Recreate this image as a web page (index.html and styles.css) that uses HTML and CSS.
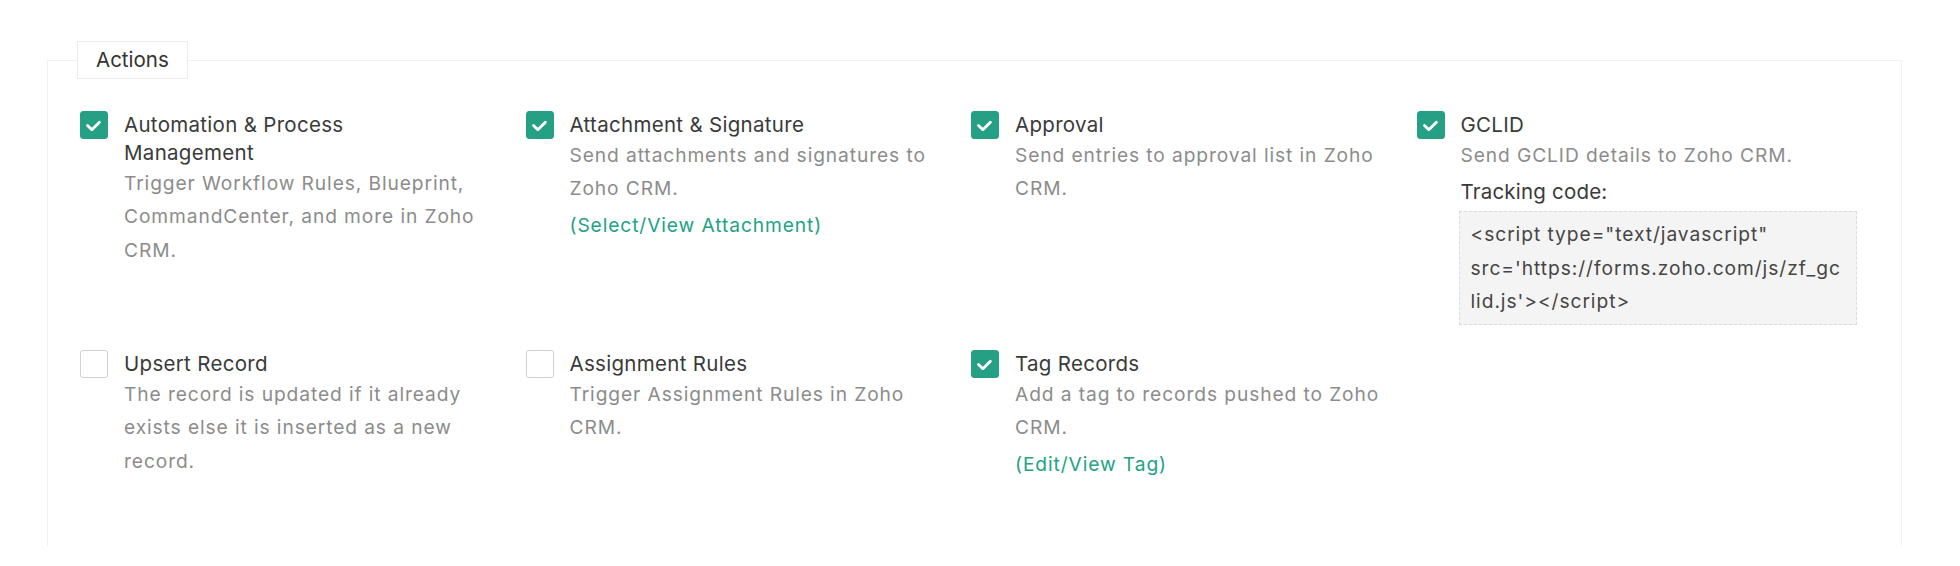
FILE: index.html
```html
<!DOCTYPE html>
<html>
<head>
  <meta charset="utf-8">
  <title>Zoho CRM Actions</title>
  <link rel="stylesheet" href="styles.css">
</head>
<body>
  <fieldset class="actions">
    <legend class="actions-title">Actions</legend>
    <div class="action-grid">

      <div class="action-item">
        <span class="check is-on"><svg viewBox="0 0 28 28"><path d="M8 15.5 L12.7 20 L20.8 12"/></svg></span>
        <div class="action-text">
          <div class="action-name">Automation &amp; Process Management</div>
          <div class="action-desc">Trigger Workflow Rules, Blueprint, CommandCenter, and more in Zoho CRM.</div>
        </div>
      </div>

      <div class="action-item">
        <span class="check is-on"><svg viewBox="0 0 28 28"><path d="M8 15.5 L12.7 20 L20.8 12"/></svg></span>
        <div class="action-text">
          <div class="action-name">Attachment &amp; Signature</div>
          <div class="action-desc">Send attachments and signatures to Zoho CRM.</div>
          <a class="action-link" href="#">(Select/View Attachment)</a>
        </div>
      </div>

      <div class="action-item">
        <span class="check is-on"><svg viewBox="0 0 28 28"><path d="M8 15.5 L12.7 20 L20.8 12"/></svg></span>
        <div class="action-text">
          <div class="action-name">Approval</div>
          <div class="action-desc">Send entries to approval list in Zoho CRM.</div>
        </div>
      </div>

      <div class="action-item">
        <span class="check is-on"><svg viewBox="0 0 28 28"><path d="M8 15.5 L12.7 20 L20.8 12"/></svg></span>
        <div class="action-text">
          <div class="action-name">GCLID</div>
          <div class="action-desc">Send GCLID details to Zoho CRM.</div>
          <div class="tracking-label">Tracking code:</div>
          <div class="tracking-code">&lt;script type="text/javascript" src='https://forms.zoho.com/js/zf_gc<wbr>lid.js'&gt;&lt;/script&gt;</div>
        </div>
      </div>

      <div class="action-item">
        <span class="check"></span>
        <div class="action-text">
          <div class="action-name">Upsert Record</div>
          <div class="action-desc">The record is updated if it already exists else it is inserted as a new record.</div>
        </div>
      </div>

      <div class="action-item">
        <span class="check"></span>
        <div class="action-text">
          <div class="action-name">Assignment Rules</div>
          <div class="action-desc">Trigger Assignment Rules in Zoho CRM.</div>
        </div>
      </div>

      <div class="action-item">
        <span class="check is-on"><svg viewBox="0 0 28 28"><path d="M8 15.5 L12.7 20 L20.8 12"/></svg></span>
        <div class="action-text">
          <div class="action-name">Tag Records</div>
          <div class="action-desc">Add a tag to records pushed to Zoho CRM.</div>
          <a class="action-link" href="#">(Edit/View Tag)</a>
        </div>
      </div>

    </div>
  </fieldset>
</body>
</html>
```

FILE: styles.css
```css
body {
  margin: 0;
  background: #ffffff;
  font-family: Inter, "Noto Sans", sans-serif;
  color: #3a3a3a;
}

.actions {
  box-sizing: border-box;
  width: 1855px;
  min-width: 0;
  margin: 41px 0 0 47px;
  padding: 32px 32px 65px 32px;
  border: 1px solid #f1f1f1;
  border-bottom: none;
}

.actions-title {
  margin-left: -3px;
  padding: 0 18px;
  line-height: 36px;
  font-size: 20.5px;
  color: #333333;
  background: #ffffff;
  border: 1px solid #ececec;
}

.action-grid {
  display: grid;
  grid-template-columns: repeat(4, 424px);
  column-gap: 21.5px;
  row-gap: 25px;
  align-items: start;
}

.action-item {
  display: flex;
  gap: 16px;
}

.check {
  flex: none;
  box-sizing: border-box;
  width: 28px;
  height: 28px;
  border: 1px solid #d2d2d2;
  border-radius: 3px;
  background: #ffffff;
}

.check.is-on {
  border-color: #26a084;
  background: #26a084;
}

.check svg {
  display: block;
  width: 26px;
  height: 26px;
}

.check svg path {
  fill: none;
  stroke: #ffffff;
  stroke-width: 3;
  stroke-linecap: round;
  stroke-linejoin: round;
  transform: translate(-1px, -1px);
}

.action-text {
  flex: 1;
  min-width: 0;
}

.action-name {
  max-width: 340px;
  font-size: 20.5px;
  line-height: 28px;
  letter-spacing: 0.3px;
  color: #3a3a3a;
}

.action-desc {
  max-width: 382px;
  font-size: 19.2px;
  line-height: 33.3px;
  letter-spacing: 0.9px;
  color: #8c8c8c;
}

.action-link {
  display: block;
  margin-top: 3px;
  font-size: 19.2px;
  line-height: 33.3px;
  letter-spacing: 0.9px;
  color: #22a286;
  text-decoration: none;
}

.tracking-label {
  margin: 6px 0 5px 0;
  font-size: 20.5px;
  line-height: 28px;
  letter-spacing: 0.2px;
  color: #3a3a3a;
}

.tracking-code {
  box-sizing: border-box;
  width: 398px;
  margin-left: -2px;
  padding: 6px 11px;
  font-size: 19.2px;
  line-height: 33.3px;
  letter-spacing: 0.95px;
  color: #454545;
  background: #f4f4f4;
  border: 1px dashed #dcdcdc;
  overflow-wrap: break-word;
}
```
